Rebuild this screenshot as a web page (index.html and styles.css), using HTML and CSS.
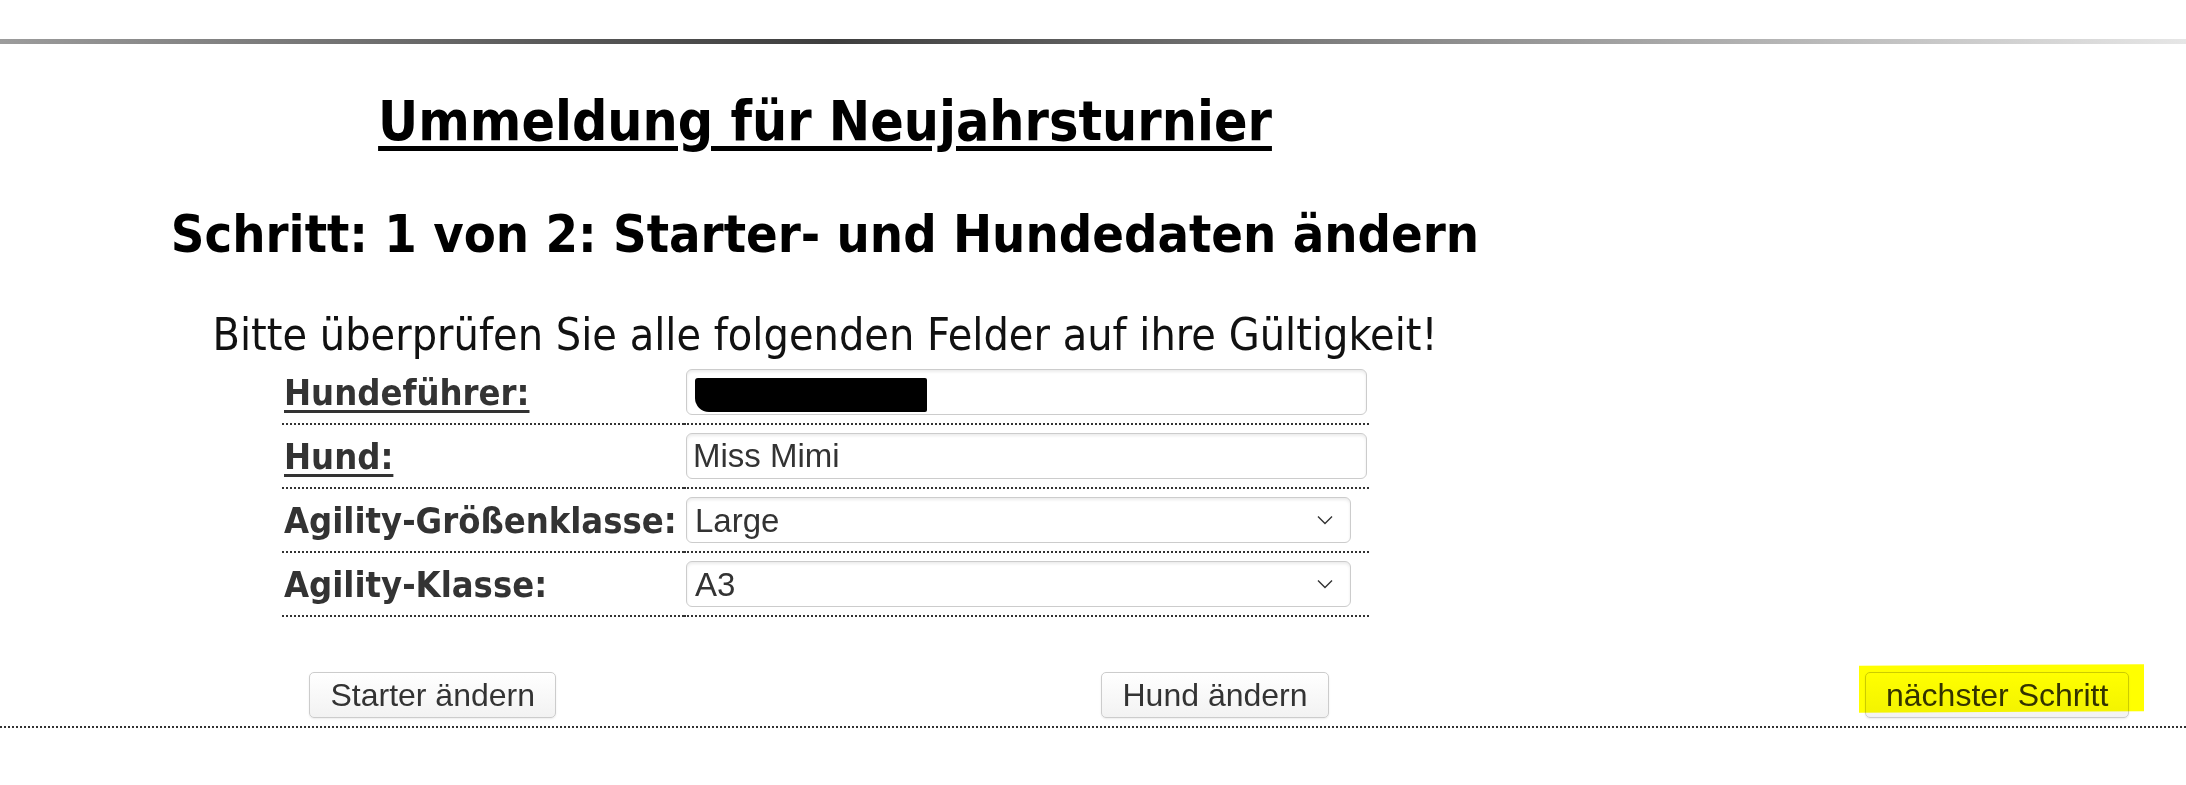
FILE: index.html
```html
<!DOCTYPE html>
<html lang="de">
<head>
    <meta charset="UTF-8">
    <title>Ummeldung</title>
    <link rel="stylesheet" href="styles.css">
</head>
<body>
    <div class="topline"></div>
    <div class="page">
        <h1>Ummeldung für Neujahrsturnier</h1>
        <h2>Schritt: 1 von 2: Starter- und Hundedaten ändern</h2>
        <p class="hint">Bitte überprüfen Sie alle folgenden Felder auf ihre Gültigkeit!</p>
        <table class="data">
            <tr>
                <td class="label"><u>Hundeführer:</u></td>
                <td class="field">
                    <input type="text" value="">
                    <span class="redact"></span>
                </td>
            </tr>
            <tr>
                <td class="label"><u>Hund:</u></td>
                <td class="field"><input type="text" value="Miss Mimi"></td>
            </tr>
            <tr>
                <td class="label">Agility-Größenklasse:</td>
                <td class="field">
                    <div class="select-box">
                        <select>
                            <option>Large</option>
                            <option>Medium</option>
                            <option>Small</option>
                        </select>
                        <svg class="chevron" viewBox="0 0 16 10"><path d="M1 1.5 L8 8.5 L15 1.5" fill="none" stroke="#333" stroke-width="1.4"/></svg>
                    </div>
                </td>
            </tr>
            <tr>
                <td class="label">Agility-Klasse:</td>
                <td class="field">
                    <div class="select-box">
                        <select>
                            <option>A3</option>
                            <option>A2</option>
                            <option>A1</option>
                        </select>
                        <svg class="chevron" viewBox="0 0 16 10"><path d="M1 1.5 L8 8.5 L15 1.5" fill="none" stroke="#333" stroke-width="1.4"/></svg>
                    </div>
                </td>
            </tr>
        </table>
    </div>
    <div class="actions">
        <div class="cell cell-left"><button class="btn">Starter ändern</button></div>
        <div class="cell cell-mid"><button class="btn">Hund ändern</button></div>
        <div class="cell cell-right"><span class="marked"><button class="btn">nächster Schritt</button></span></div>
    </div>
</body>
</html>
```

FILE: styles.css
```css
* {
    margin: 0;
    padding: 0;
    box-sizing: border-box;
}
body {
    margin: 0;
    background: #fff;
    font-family: "DejaVu Sans Condensed", "DejaVu Sans", sans-serif;
    color: #000;
}
.topline {
    height: 5px;
    margin-top: 39px;
    background: linear-gradient(to right, #9c9c9c 0%, #5a5a5a 25%, #3e3e3e 38%, #8a8a8a 65%, #e6e6e6 100%);
}
.page {
    width: 1650px;
}
h1 {
    margin-top: 45px;
    text-align: center;
    font-size: 55px;
    line-height: 64px;
    font-weight: bold;
    text-decoration: underline;
    text-decoration-thickness: 5px;
    text-underline-offset: 6px;
}
h2 {
    margin-top: 49px;
    text-align: center;
    font-size: 52px;
    line-height: 64px;
    font-weight: bold;
}
.hint {
    margin-top: 44px;
    text-align: center;
    font-size: 44.5px;
    line-height: 50px;
    color: #111;
}
.data {
    margin-top: 1px;
    margin-left: 282px;
    border-collapse: separate;
    border-spacing: 0;
}
.data td {
    padding: 8px 2px 8px;
    border-bottom: 2px dotted #333;
    vertical-align: middle;
}
.label {
    width: 402px;
    font-size: 36px;
    font-weight: bold;
    color: #333;
    white-space: nowrap;
}
.label u {
    text-decoration-thickness: 3px;
    text-underline-offset: 5px;
}
.field {
    position: relative;
    width: 685px;
}
input,
select,
.btn {
    font-family: "Liberation Sans", Arial, sans-serif;
    font-size: 33px;
    color: #333;
}
input {
    display: block;
    width: 681px;
    height: 46px;
    padding: 0 6px;
    border: 1px solid #ccc;
    border-radius: 6px;
    box-shadow: inset 0 2px 3px rgba(0, 0, 0, 0.08);
    background: #fff;
}
.redact {
    position: absolute;
    left: 11px;
    top: 17px;
    width: 232px;
    height: 34px;
    background: #000;
    border-radius: 3px 2px 2px 14px;
}
.select-box {
    position: relative;
    width: 665px;
}
select {
    appearance: none;
    display: block;
    width: 665px;
    height: 46px;
    padding: 0 40px 0 8px;
    border: 1px solid #ccc;
    border-radius: 6px;
    box-shadow: inset 0 2px 3px rgba(0, 0, 0, 0.08);
    background: #fff;
}
.chevron {
    position: absolute;
    right: 18px;
    top: 18px;
    width: 16px;
    height: 10px;
    pointer-events: none;
}
.actions {
    display: grid;
    grid-template-columns: 556px 1304px 1fr;
    margin-top: 55px;
    padding-bottom: 8px;
    border-bottom: 2px dotted #333;
}
.cell {
    display: flex;
}
.cell-left {
    justify-content: flex-end;
}
.cell-mid {
    justify-content: center;
    padding-left: 14px;
}
.cell-right {
    padding-left: 5px;
}
.btn {
    height: 46px;
    padding: 0 20px;
    font-size: 32px;
    white-space: nowrap;
    border: 1px solid #ccc;
    border-radius: 5px;
    background: linear-gradient(#fff, #f2f2f2);
    box-shadow: 0 1px 2px rgba(0, 0, 0, 0.08);
    cursor: pointer;
}
.marked {
    position: relative;
    display: inline-block;
}
.marked::before {
    content: "";
    position: absolute;
    left: -6px;
    right: -15px;
    top: -7px;
    bottom: 6px;
    background: #ffff00;
    mix-blend-mode: multiply;
    z-index: 1;
    pointer-events: none;
    transform: skewY(-0.3deg);
}
```
